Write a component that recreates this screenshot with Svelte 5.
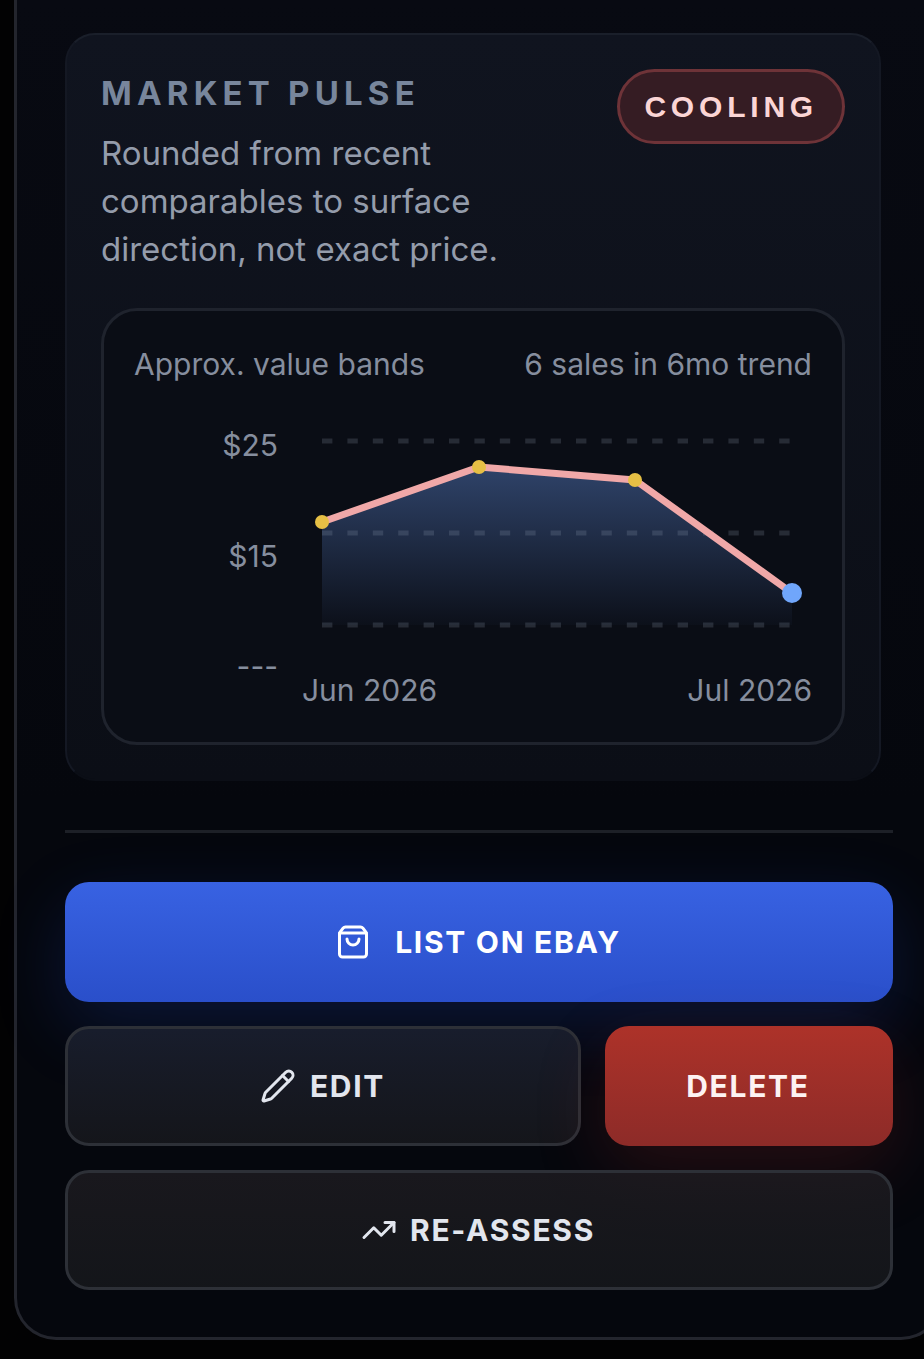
<script>
    const points = [[19, 111], [176, 56], [332, 69], [489, 182]];
    const gridLines = [30, 122, 214];
    const yLabels = ["$25", "$15", "---"];

    const linePath = points.map((p) => p.join(",")).join(" ");
    const areaPath = "19,214 " + linePath + " 489,214";
</script>

<main>
    <section class="panel">
        <div class="pulse">
            <header class="pulse-head">
                <div class="pulse-copy">
                    <h2>MARKET PULSE</h2>
                    <p>Rounded from recent comparables to surface direction, not exact price.</p>
                </div>
                <span class="badge">COOLING</span>
            </header>

            <div class="chart-card">
                <div class="chart-head">
                    <span>Approx. value bands</span>
                    <span>6 sales in 6mo trend</span>
                </div>
                <div class="chart-body">
                    <div class="y-axis">
                        {#each yLabels as label}
                            <span>{label}</span>
                        {/each}
                    </div>
                    <div class="plot">
                        <svg width="509" height="257" viewBox="0 0 509 257">
                            <defs>
                                <linearGradient id="area" x1="0" y1="56" x2="0" y2="214" gradientUnits="userSpaceOnUse">
                                    <stop offset="0" stop-color="#2f4369" />
                                    <stop offset="1" stop-color="#2f4369" stop-opacity="0.06" />
                                </linearGradient>
                            </defs>
                            <polygon points={areaPath} fill="url(#area)" />
                            {#each gridLines as y}
                                <line x1="19" x2="489" y1={y} y2={y} class="grid" />
                            {/each}
                            <polyline points={linePath} class="trend" />
                            {#each points.slice(0, 3) as p}
                                <circle cx={p[0]} cy={p[1]} r="7" fill="#e6bf45" />
                            {/each}
                            <circle cx="489" cy="182" r="10" fill="#70a6fb" />
                        </svg>
                        <div class="x-axis">
                            <span>Jun 2026</span>
                            <span>Jul 2026</span>
                        </div>
                    </div>
                </div>
            </div>
        </div>

        <hr />

        <div class="actions">
            <button class="btn primary">
                <svg class="icon" viewBox="0 0 24 24">
                    <path d="M16 10a4 4 0 0 1-8 0" />
                    <path d="M3.103 6.034h17.794" />
                    <path d="M3.4 5.467a2 2 0 0 0-.4 1.2V20a2 2 0 0 0 2 2h14a2 2 0 0 0 2-2V6.667a2 2 0 0 0-.4-1.2l-2-2.667A2 2 0 0 0 17 2H7a2 2 0 0 0-1.6.8z" />
                </svg>
                LIST ON EBAY
            </button>
            <div class="row">
                <button class="btn ghost edit">
                    <svg class="icon" viewBox="0 0 24 24">
                        <path d="M21.174 6.812a1 1 0 0 0-3.986-3.987L3.842 16.174a2 2 0 0 0-.5.83l-1.321 4.352a.5.5 0 0 0 .623.622l4.353-1.32a2 2 0 0 0 .83-.497z" />
                        <path d="m15 5 4 4" />
                    </svg>
                    EDIT
                </button>
                <button class="btn danger">DELETE</button>
            </div>
            <button class="btn ghost reassess">
                <svg class="icon" viewBox="0 0 24 24">
                    <path d="M22 7 13.5 15.5 8.5 10.5 2 17" />
                    <path d="M16 7h6v6" />
                </svg>
                RE-ASSESS
            </button>
        </div>
    </section>
</main>

<style>
    :global(body) {
        background: #020203;
        overflow: hidden;
    }

    main {
        height: 1359px;
        overflow: hidden;
        font-family: Inter, "Liberation Sans", sans-serif;
        background: #020203;
    }

    .panel {
        box-sizing: border-box;
        width: 929px;
        height: 1340px;
        margin-left: 14px;
        padding: 33px 50px 0 48px;
        border: 3px solid #23252d;
        border-top: none;
        border-radius: 0 0 42px 42px;
        background: linear-gradient(180deg, #080a12, #05070d 60%);
    }

    .pulse {
        box-sizing: border-box;
        width: 816px;
        height: 748px;
        padding: 31px 34px 34px 34px;
        border: 2px solid #141823;
        border-top-color: #1a1f2a;
        border-bottom-color: #0b0e16;
        border-radius: 30px;
        background: linear-gradient(180deg, #10141f, #0b0e16);
    }

    .pulse-head {
        display: flex;
        justify-content: space-between;
        align-items: flex-start;
    }

    .pulse-copy {
        width: 420px;
    }

    h2 {
        margin: 3px 0 0;
        font-size: 33px;
        line-height: 48px;
        font-weight: 700;
        letter-spacing: 5.2px;
        color: #78869c;
    }

    .pulse-copy p {
        margin: 12px 0 0;
        font-size: 33px;
        line-height: 48px;
        color: #949cab;
    }

    .badge {
        box-sizing: border-box;
        height: 75px;
        margin-top: 3px;
        padding: 0 24px;
        display: flex;
        align-items: center;
        font-family: "Liberation Sans", sans-serif;
        font-size: 30px;
        font-weight: 700;
        letter-spacing: 4.8px;
        color: #fbd5d5;
        border: 3px solid #6e3338;
        border-radius: 38px;
        background: #351c23;
    }

    .chart-card {
        box-sizing: border-box;
        height: 437px;
        margin-top: 35px;
        padding: 31px 30px 30px 30px;
        border: 3px solid #1f232d;
        border-radius: 36px;
        background: #0a0d15;
    }

    .chart-head {
        display: flex;
        justify-content: space-between;
        font-size: 30px;
        line-height: 45px;
        color: #868e9e;
    }

    .chart-body {
        display: flex;
        justify-content: space-between;
        margin-top: 24px;
    }

    .y-axis {
        flex: 1;
        display: flex;
        flex-direction: column;
        align-items: flex-end;
        gap: 65.5px;
        padding: 12px 25px 0 0;
        font-size: 30px;
        line-height: 45px;
        color: #868e9e;
    }

    .plot {
        width: 509px;
    }

    .plot svg {
        display: block;
    }

    .grid {
        stroke: #94a3b8;
        stroke-opacity: 0.2;
        stroke-width: 5;
        stroke-dasharray: 10.4 15;
    }

    .trend {
        fill: none;
        stroke: #f0a8a8;
        stroke-width: 7;
        stroke-linejoin: round;
    }

    .x-axis {
        display: flex;
        justify-content: space-between;
        margin-left: -1px;
        font-size: 30px;
        line-height: 45px;
        color: #868e9e;
    }

    hr {
        width: 828px;
        height: 3px;
        margin: 49px 0 49px;
        border: none;
        background: #1d2027;
    }

    .actions {
        display: flex;
        flex-direction: column;
        gap: 24px;
        width: 828px;
    }

    .row {
        display: flex;
        gap: 24px;
    }

    .btn {
        box-sizing: border-box;
        height: 120px;
        display: flex;
        align-items: center;
        justify-content: center;
        padding: 0 2px 0 0;
        border: none;
        border-radius: 24px;
        font-family: inherit;
        font-size: 30px;
        font-weight: 700;
        letter-spacing: 1.7px;
    }

    .icon {
        width: 36px;
        height: 36px;
        fill: none;
        stroke: currentColor;
        stroke-width: 2;
        stroke-linecap: round;
        stroke-linejoin: round;
    }

    .primary {
        gap: 24px;
        color: #fff;
        background: linear-gradient(180deg, #3862e2, #2a4fca);
        box-shadow: 0 24px 72px rgba(37, 80, 220, 0.2);
    }

    .ghost {
        color: #e2e6ee;
        border: 3px solid #2d3037;
        background: linear-gradient(180deg, rgba(26, 31, 46, 0.9), rgba(22, 23, 28, 0.9));
    }

    .edit {
        flex: 1;
        gap: 14px;
        padding-right: 1px;
    }

    .reassess {
        gap: 13px;
        background: linear-gradient(180deg, rgba(30, 28, 33, 0.8), rgba(22, 24, 28, 0.85));
    }

    .danger {
        width: 288px;
        color: #fdf2f2;
        background: linear-gradient(180deg, #ad3229, #8d2b28);
        box-shadow: 0 24px 72px rgba(170, 40, 40, 0.2);
    }
</style>
